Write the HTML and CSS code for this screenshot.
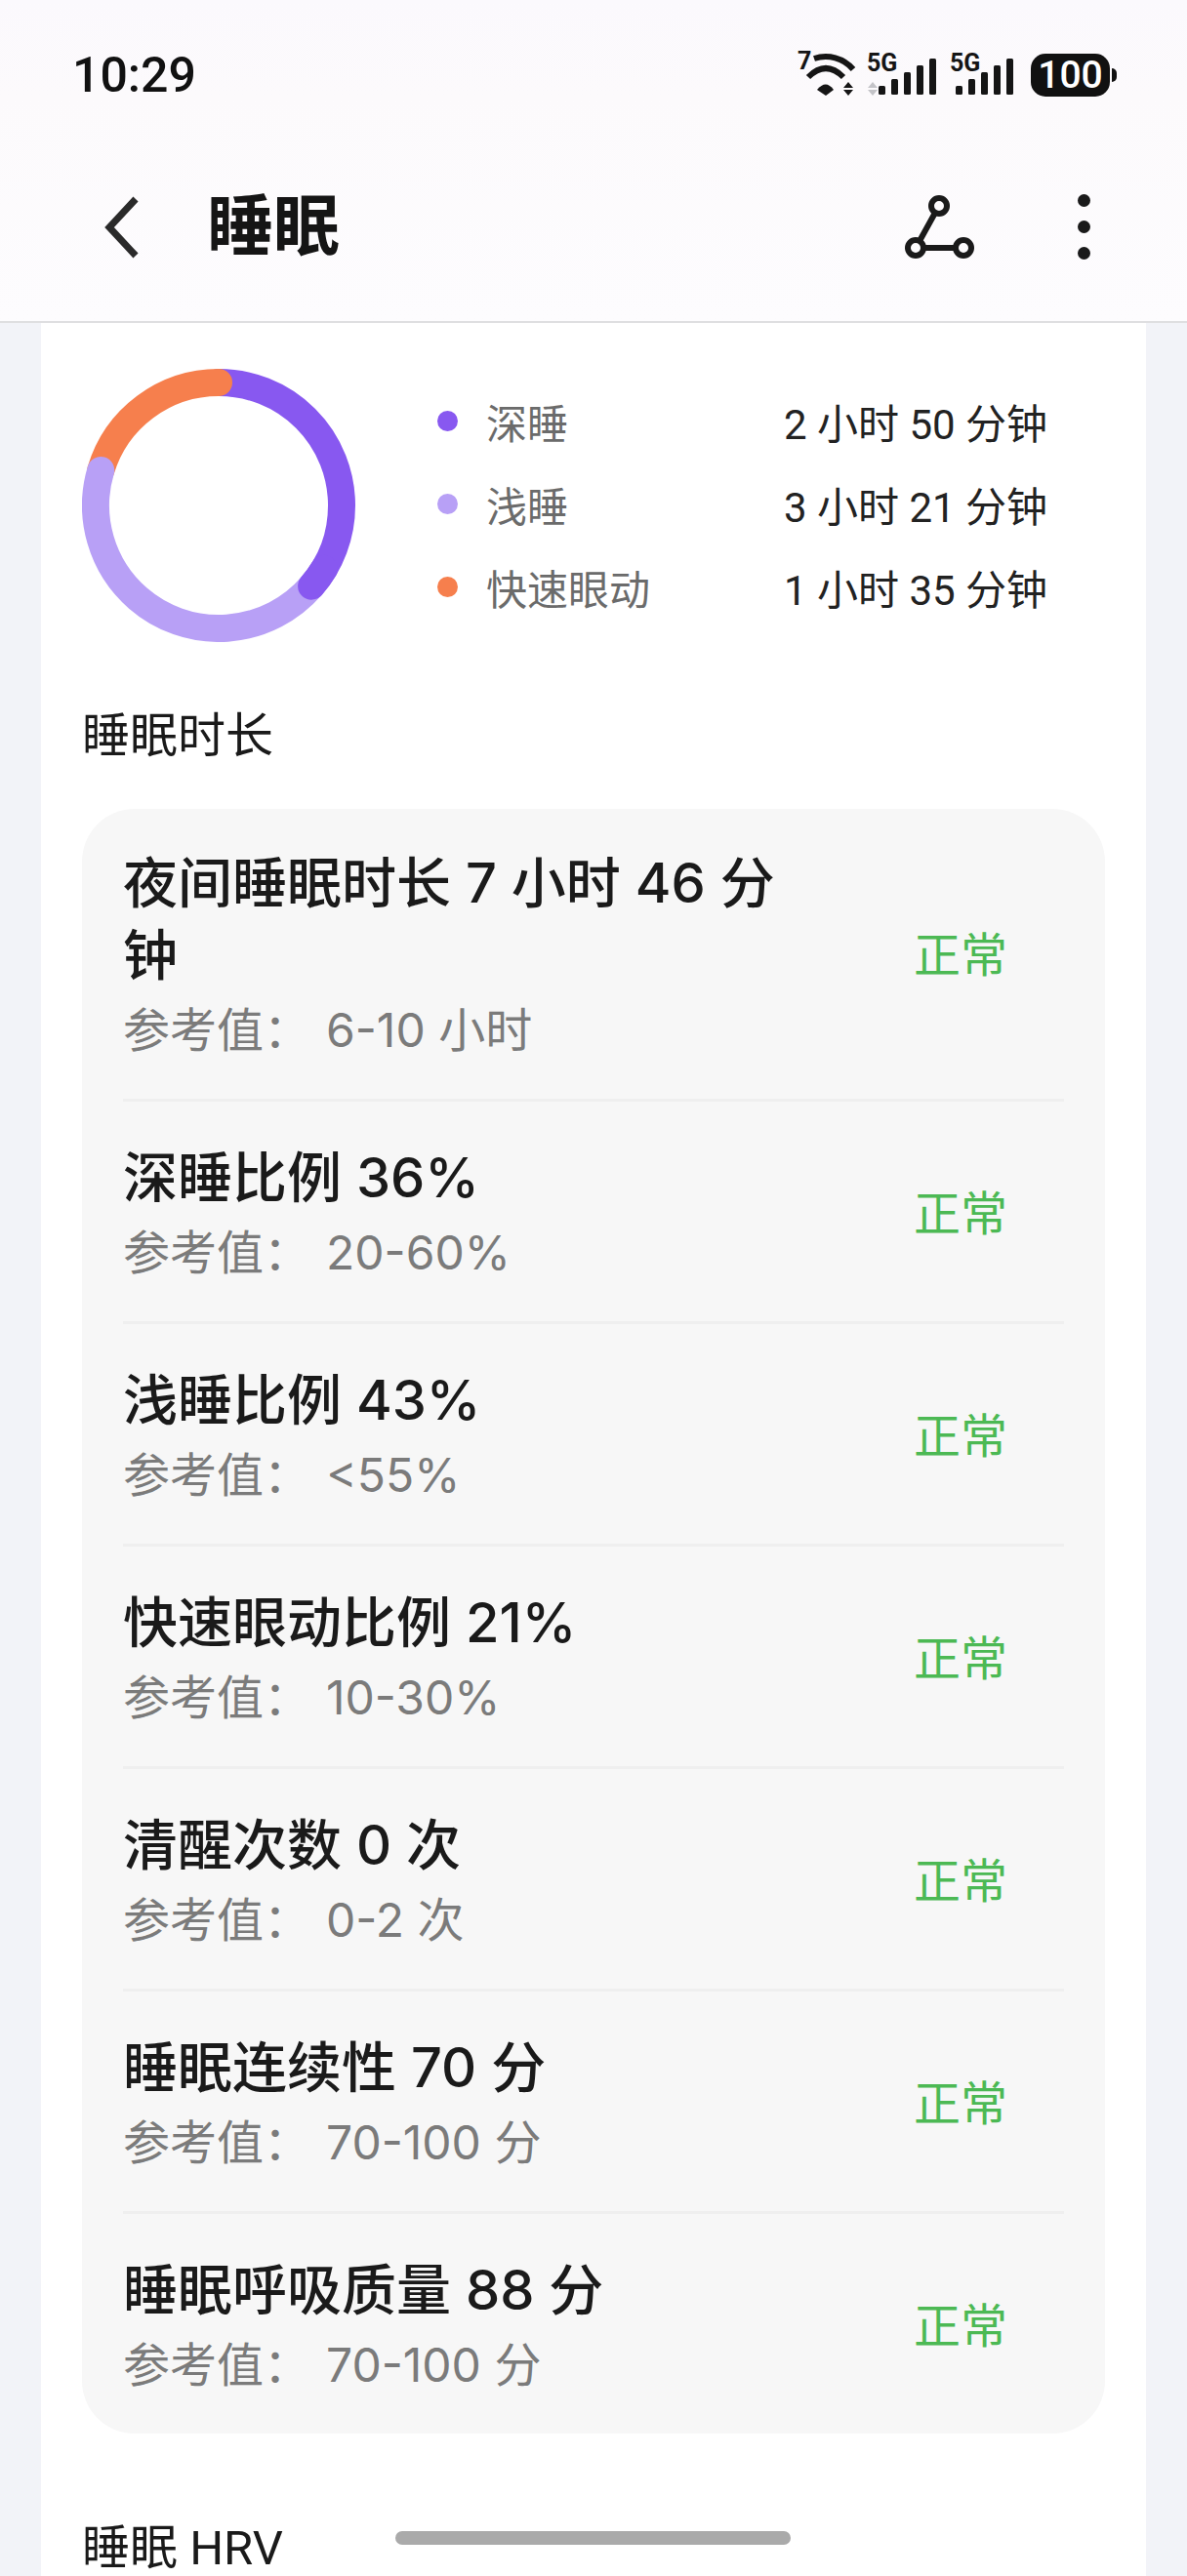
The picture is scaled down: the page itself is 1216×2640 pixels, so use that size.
FILE: index.html

```html
<!DOCTYPE html>
<html lang="zh">
<head>
  <meta charset="UTF-8" />
  <meta name="viewport" content="width=device-width, initial-scale=1.0"/>
  <title>睡眠</title>
  <link rel="stylesheet" href="styles.css">
</head>
<body>
  <header class="top">
    <div class="status">
      <span class="time">10:29</span>
      <div class="status-icons">
        <svg class="wifi" width="62" height="46" viewBox="0 0 62 46">
          <text class="wifi-gen" x="0" y="17">7</text>
          <path class="wifi-arc" d="M17 6 A37 37 0 0 1 57 17"/>
          <path class="wifi-arc" d="M11 25 Q29 7 47 25"/>
          <path class="wifi-fill" d="M20 38 Q29 27 37 38 L29 44 Z"/>
          <path class="wifi-fill" d="M47 36 L52 30 L57 36 Z M47 38 L57 38 L52 44 Z"/>
        </svg>
        <svg class="signal" width="62" height="46" viewBox="0 0 62 46">
          <text class="net" x="0" y="19">5G</text>
          <path class="updown" d="M1 36 L6 30 L11 36 Z M1 38 L11 38 L6 44 Z"/>
          <rect x="12" y="34" width="7" height="9" rx="1.5"/>
          <rect x="25" y="27" width="7" height="16" rx="1.5"/>
          <rect x="38" y="20" width="7" height="23" rx="1.5"/>
          <rect x="51" y="13" width="7" height="30" rx="1.5"/>
          <rect x="64" y="6" width="7" height="37" rx="1.5"/>
        </svg>
        <svg class="signal second" width="62" height="46" viewBox="0 0 62 46">
          <text class="net" x="0" y="19">5G</text>
          <rect x="6" y="34" width="7" height="9" rx="1.5"/>
          <rect x="19" y="27" width="7" height="16" rx="1.5"/>
          <rect x="32" y="20" width="7" height="23" rx="1.5"/>
          <rect x="45" y="13" width="7" height="30" rx="1.5"/>
          <rect x="58" y="6" width="7" height="37" rx="1.5"/>
        </svg>
        <div class="battery"><span class="battery-level">100</span><i class="battery-nub"></i></div>
      </div>
    </div>
    <nav class="nav">
      <svg class="back" width="36" height="64" viewBox="0 0 36 64">
        <path d="M32 3 L5 32 L32 61"/>
      </svg>
      <h1>睡眠</h1>
      <svg class="share" width="72" height="66" viewBox="0 0 72 66">
        <circle cx="35" cy="11" r="8"/>
        <circle cx="11" cy="54" r="8"/>
        <circle cx="60" cy="54" r="8"/>
        <path d="M31 18 L15 47 M19 54 L52 54"/>
      </svg>
      <div class="more"><i></i><i></i><i></i></div>
    </nav>
  </header>

  <main class="card">
    <section class="summary">
      <svg class="donut" width="280" height="280" viewBox="0 0 280 280">
        <!-- each arc is a rotated circle, pathLength is in degrees -->
        <circle class="deep" cx="140" cy="140" r="126" pathLength="360" stroke-dasharray="131 360" transform="rotate(-90 140 140)"/>
        <circle class="rem" cx="140" cy="140" r="126" pathLength="360" stroke-dasharray="73.4 360" transform="rotate(196.6 140 140)"/>
        <circle class="light" cx="140" cy="140" r="126" pathLength="360" stroke-dasharray="155.6 360" transform="rotate(41 140 140)"/>
        <circle class="deep" cx="140" cy="140" r="126" pathLength="360" stroke-dasharray="10 360" transform="rotate(31 140 140)"/>
      </svg>
      <ul class="legend">
        <li><i class="dot dot-deep"></i><span class="legend-name">深睡</span><span class="legend-val">2 小时 50 分钟</span></li>
        <li><i class="dot dot-light"></i><span class="legend-name">浅睡</span><span class="legend-val">3 小时 21 分钟</span></li>
        <li><i class="dot dot-rem"></i><span class="legend-name">快速眼动</span><span class="legend-val">1 小时 35 分钟</span></li>
      </ul>
    </section>

    <h2 class="section-title">睡眠时长</h2>
    <div class="panel">
      <div class="row">
        <div class="row-text">
          <div class="row-title">夜间睡眠时长 7 小时 46 分钟</div>
          <div class="row-ref">参考值：<span>6-10 小时</span></div>
        </div>
        <span class="ok">正常</span>
      </div>
      <div class="row">
        <div class="row-text">
          <div class="row-title">深睡比例 36%</div>
          <div class="row-ref">参考值：<span>20-60%</span></div>
        </div>
        <span class="ok">正常</span>
      </div>
      <div class="row">
        <div class="row-text">
          <div class="row-title">浅睡比例 43%</div>
          <div class="row-ref">参考值：<span>&lt;55%</span></div>
        </div>
        <span class="ok">正常</span>
      </div>
      <div class="row">
        <div class="row-text">
          <div class="row-title">快速眼动比例 21%</div>
          <div class="row-ref">参考值：<span>10-30%</span></div>
        </div>
        <span class="ok">正常</span>
      </div>
      <div class="row">
        <div class="row-text">
          <div class="row-title">清醒次数 0 次</div>
          <div class="row-ref">参考值：<span>0-2 次</span></div>
        </div>
        <span class="ok">正常</span>
      </div>
      <div class="row">
        <div class="row-text">
          <div class="row-title">睡眠连续性 70 分</div>
          <div class="row-ref">参考值：<span>70-100 分</span></div>
        </div>
        <span class="ok">正常</span>
      </div>
      <div class="row">
        <div class="row-text">
          <div class="row-title">睡眠呼吸质量 88 分</div>
          <div class="row-ref">参考值：<span>70-100 分</span></div>
        </div>
        <span class="ok">正常</span>
      </div>
    </div>

    <h2 class="section-title hrv">睡眠 HRV</h2>
  </main>

  <div class="home-bar"></div>
</body>
</html>
```

FILE: styles.css

```css
* { box-sizing: border-box; }
html, body { margin: 0; height: 2640px; overflow: hidden; }
body {
  position: relative;
  font-family: Roboto, "Noto Sans CJK SC", sans-serif;
  background: #f2f3f8;
  color: #1a1a1a;
}
ul { list-style: none; margin: 0; padding: 0; }

/* top bar */
.top {
  height: 331px;
  background: linear-gradient(180deg, #fbf9fd 0%, #fcfafc 30%, #fdfcfe 100%);
  border-bottom: 2px solid #dfdfe1;
}
.status {
  height: 154px;
  padding: 0 79px 0 74px;
  display: flex;
  align-items: center;
  justify-content: space-between;
}
.time { font-size: 50px; font-weight: 500; color: #111; }
.status-icons { display: flex; align-items: center; }
.status-icons svg { overflow: visible; fill: #151515; }
.wifi { margin-right: 9px; }
.signal { margin-right: 23px; }
.signal.second { margin-right: 21px; }
.wifi-gen, .net { font-family: Roboto, sans-serif; font-weight: 700; }
.wifi-gen { font-size: 25px; }
.net { font-size: 25px; }
.wifi-arc { fill: none; stroke: #151515; stroke-width: 6px; }
.updown { fill: #c4c4c8; }
.battery { position: relative; width: 81px; height: 44px; border-radius: 15px; background: #111; text-align: center; }
.battery-level { font-size: 39px; line-height: 44px; font-weight: 500; color: #fff; }
.battery-nub { position: absolute; left: 83px; top: 15px; width: 5px; height: 14px; border-radius: 0 7px 7px 0; background: #111; }

.nav {
  height: 175px;
  padding: 0 0 18px 107px;
  display: flex;
  align-items: center;
}
.nav h1 { margin: 0 0 0 69px; font-size: 68px; font-weight: 700; line-height: 80px; color: #151515; }
.back { fill: none; stroke: #2a2a2a; stroke-width: 7px; }
.share { margin-left: auto; fill: none; stroke: #1a1a1a; stroke-width: 6px; }
.more { margin: 0 99px 0 105px; display: flex; flex-direction: column; gap: 14px; }
.more i { width: 13px; height: 13px; border-radius: 50%; background: #1a1a1a; display: block; }

/* white card */
.card {
  margin: 0 42px;
  padding: 47px 42px 0;
  background: #fff;
}
.summary { display: flex; align-items: center; }
.donut { flex: none; fill: none; stroke-width: 28px; stroke-linecap: round; }
.deep { stroke: #8858f0; }
.light { stroke: #b8a0f6; }
.rem { stroke: #f67f4d; }
.legend { margin: 0 0 4px 84px; }
.legend li { height: 85px; display: flex; align-items: center; font-size: 42px; }
.dot { width: 21px; height: 21px; border-radius: 50%; margin-right: 29px; }
.dot-deep { background: #8858f0; }
.dot-light { background: #b8a0f6; }
.dot-rem { background: #f67f4d; }
.legend-name { width: 305px; color: #6b6b6b; }
.legend-val { color: #222; }

.section-title { margin: 67px 0 44px; font-size: 49px; font-weight: 400; line-height: 60px; color: #1a1a1a; }
.hrv { margin-top: 88px; }

.panel { background: #f7f7f7; border-radius: 54px; padding: 0 42px; }
.row {
  display: flex;
  align-items: center;
  justify-content: space-between;
  padding: 41px 0 30px;
  border-bottom: 3px solid #efefef;
}
.row:first-child { padding-top: 39px; }
.row:last-child { border-bottom: 0; }
.row-text { max-width: 670px; font-family: Inter, "Noto Sans CJK SC", sans-serif; }
.row-title { font-size: 56px; font-weight: 500; line-height: 74px; color: #1a1a1a; }
.row-ref { font-size: 48px; line-height: 80px; color: #7b7b7b; }
.row-ref span { margin-left: 16px; }
.ok { margin: 0 58px 14px 0; font-size: 48px; color: #4cb954; }

.home-bar {
  position: absolute;
  left: 405px;
  top: 2594px;
  width: 405px;
  height: 14px;
  border-radius: 7px;
  background: #aaa;
}
```
